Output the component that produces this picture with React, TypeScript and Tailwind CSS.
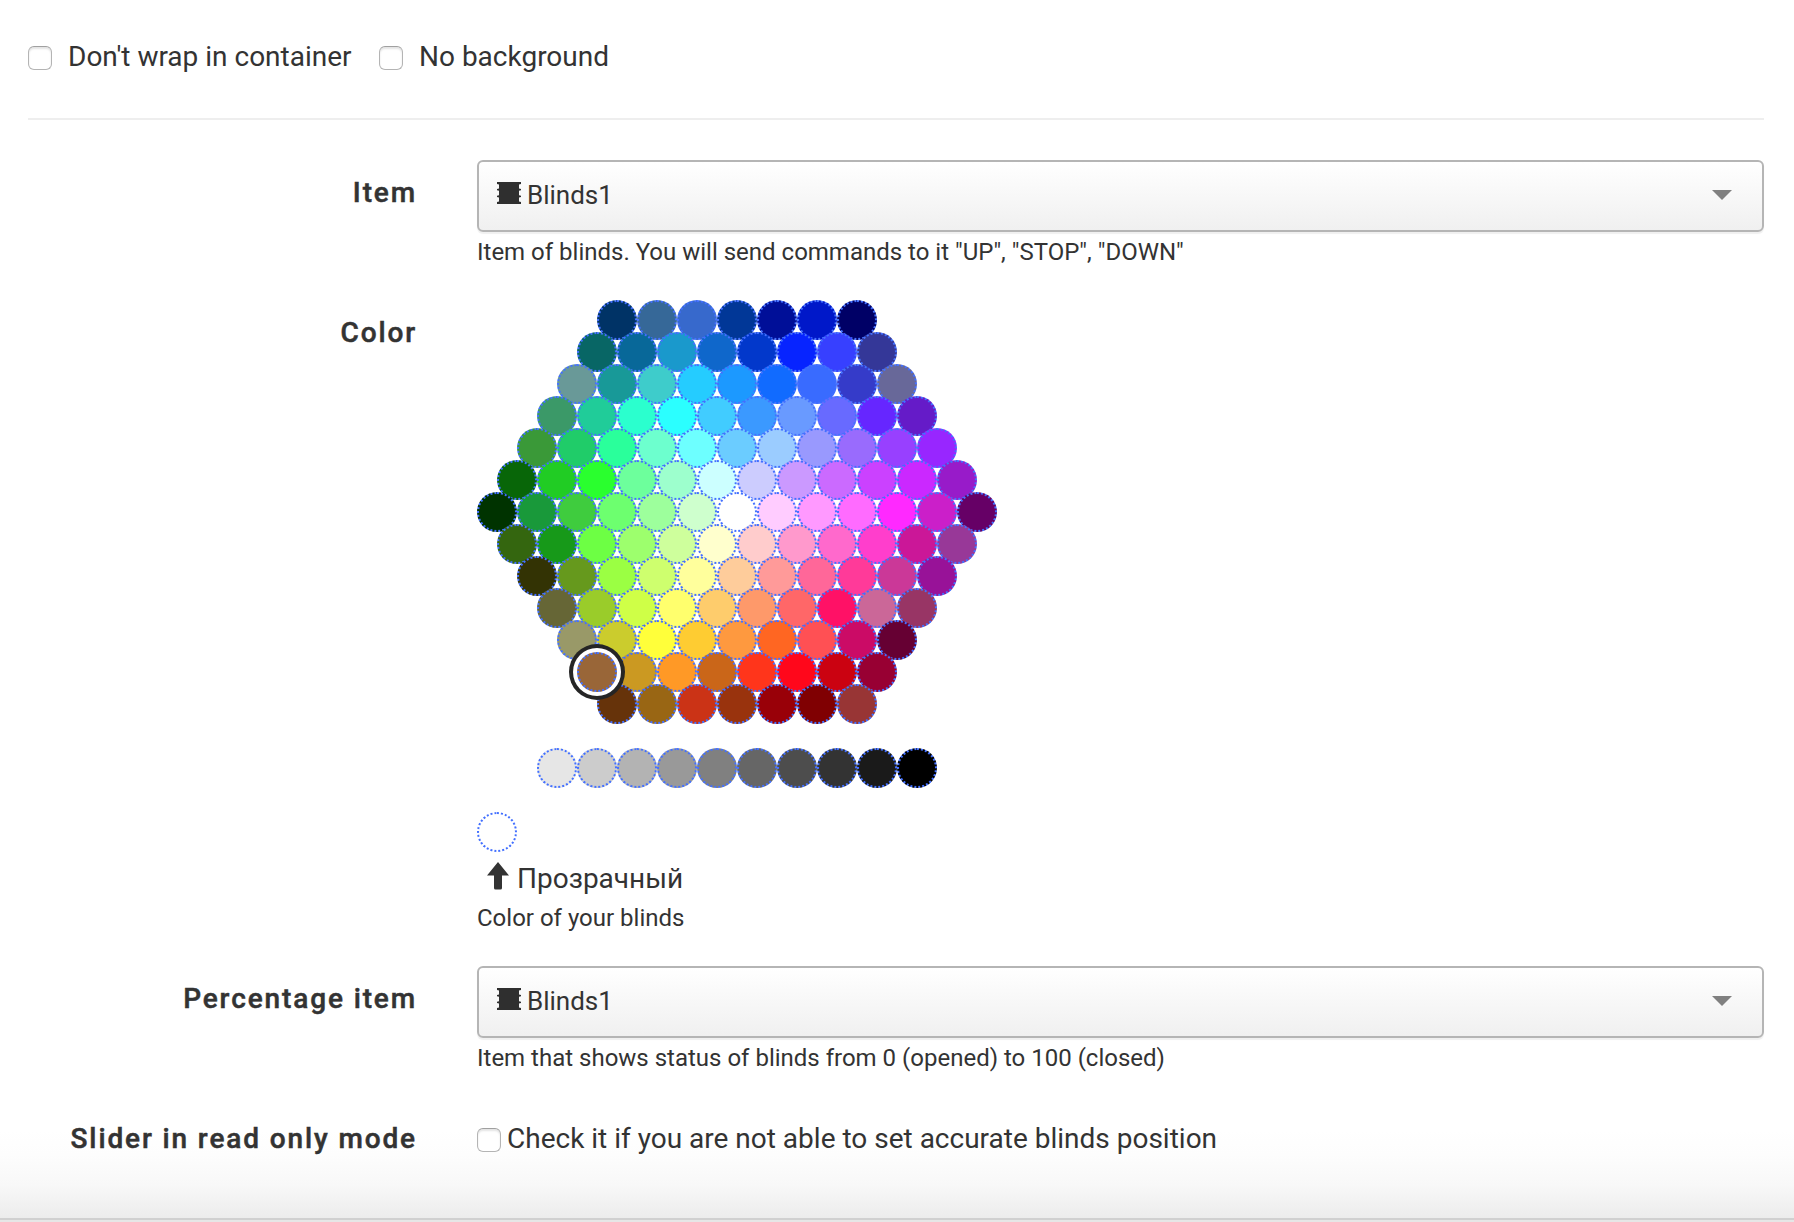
import React from "react";

const HEX_ROWS: string[] = [
  "#003366 #366898 #3769cc #013797 #000f98 #0018c9 #000066",
  "#086665 #086899 #1a99cc #0f67cb #0238cb #0724ff #3740ff #343798",
  "#699998 #189998 #3ecccb #25ccff #1c99ff #116bff #396bff #353bc9 #686899",
  "#3b9968 #20cc99 #2bffce #2bffff #41ccff #3b99ff #699aff #686aff #6626ff #651bc8",
  "#3a9938 #20cc69 #2aff9b #6dffce #6dffff #6bccff #9bccff #9999fe #996bfd #9840ff #9826ff",
  "#086608 #21cc24 #2aff2e #6dff9c #9dffcd #ccffff #ccccfe #cb99ff #cb6aff #cb41ff #cb28ff #981bc9",
  "#003300 #19993a #3fcc3e #6dff6f #9dff9c #ceffcd #ffffff #ffccff #ff99ff #ff6bff #ff29ff #cb1fc9 #660066",
  "#34660f #179919 #6dff44 #9dff6d #ceff9c #ffffcd #ffcccc #ff99cc #ff69cc #ff3ecc #cb1798 #983898",
  "#333304 #66991d #9bff43 #ceff6e #ffff9c #fecc9b #ff9a99 #ff6799 #ff3a99 #cb3898 #981298",
  "#666636 #9acc2a #cfff47 #ffff6d #fecc6c #fe996a #ff6768 #ff1166 #cb6798 #983565",
  "#999968 #cbcc2d #ffff3a #fecc32 #fe993f #ff6622 #ff5054 #cb0b66 #660033",
  "#996638 #cb9922 #ff9926 #ca6619 #ff351b #ff071b #cb0211 #980033",
  "#66330a #996614 #cb3316 #99330d #990008 #800002 #983535",
];

const GRAYS =
  "#e6e6e6 #cccccc #b3b3b3 #999999 #808080 #666666 #4d4d4d #333333 #1a1a1a #000000".split(" ");

const SELECTED = "#996638";

function Swatch({ color }: { color: string }) {
  const selected = color === SELECTED;
  return (
    <button
      type="button"
      aria-label={color}
      className={
        selected
          ? "relative z-10 size-10 shrink-0 rounded-full border-2 border-dotted border-[#4370ff] shadow-[0_0_0_4px_#fff,0_0_0_8px_#252525]"
          : "size-10 shrink-0 rounded-full border-2 border-dotted border-[#4370ff]"
      }
      style={{ backgroundColor: color }}
    />
  );
}

function Checkbox() {
  return (
    <span className="block size-6 shrink-0 rounded-[6px] border border-[#b4b4b4] border-t-[#a0a0a0] bg-white shadow-[inset_0_2px_2px_#e4e4e4]" />
  );
}

function BlindsIcon() {
  return (
    <svg width="24" height="22" viewBox="0 0 24 22" fill="#2f2f2f" className="mt-[-6px] shrink-0">
      <path d="M0 0h24v2l-2 .5v4l2 .5v1.200l-2 .5v4.600l2 .5V15l-2 .5v4l2 .5v2H0v-2l2-.5v-4L0 15v-1.200l2-.5V8.700L0 8.200V7l2-.5v-4L0 2z" />
    </svg>
  );
}

function Select({ value }: { value: string }) {
  return (
    <div className="flex h-[72px] items-center rounded-[6px] border-2 border-[#b5b5b5] bg-linear-to-b from-white to-[#f0f0f0] pr-[30px] pl-[18px] shadow-[0_2px_1px_#f0f0f0]">
      <BlindsIcon />
      <span className="mt-[-2px] ml-[6px] flex-1 text-[26px] leading-[30px]">{value}</span>
      <svg width="20" height="10" viewBox="0 0 20 10" fill="#808080" className="mt-[-2px]">
        <path d="M0 0h20L10 10z" />
      </svg>
    </div>
  );
}

function Row({ label, className, children }: { label: string; className: string; children: React.ReactNode }) {
  return (
    <div className={`flex ${className}`}>
      <div className="w-[389px] shrink-0 pt-[13px] text-right text-[28px] leading-10 font-medium tracking-[1.88px] whitespace-nowrap [-webkit-text-stroke:0.5px_#333]">
        {label}
      </div>
      <div className="ml-[60px] w-[1287px] shrink-0">{children}</div>
    </div>
  );
}

function Help({ children }: { children: React.ReactNode }) {
  return <p className="text-[24px] leading-[28px]">{children}</p>;
}

export default function App() {
  return (
    <div className="flex h-[1222px] w-[1794px] flex-col overflow-hidden bg-white font-['Roboto',sans-serif] text-[#333]">
      <div className="flex h-[1218px] shrink-0 flex-col bg-[linear-gradient(to_bottom,#fff_0,#fff_1130px,#fdfdfd_1155px,#f8f8f8_1185px,#ececec_1218px)] pr-[30px] pl-7">
        <div className="flex h-[120px] items-start border-b-2 border-[#eee] pt-[36px] text-[28px] leading-10">
          <div className="mt-[10px]"><Checkbox /></div>
          <span className="mt-px ml-4 w-[311px] whitespace-nowrap">Don't wrap in container</span>
          <div className="mt-[10px]"><Checkbox /></div>
          <span className="mt-px ml-4 whitespace-nowrap">No background</span>
        </div>

        <Row label="Item" className="mt-10 h-[140px]">
          <Select value="Blinds1" />
          <div className="pt-[6px]"><Help>Item of blinds. You will send commands to it "UP", "STOP", "DOWN"</Help></div>
        </Row>

        <Row label="Color" className="h-[666px]">
          <div className="flex w-[520px] flex-col items-center">
            {HEX_ROWS.map((row, i) => (
              <div key={i} className="flex h-8">
                {row.split(" ").map((c) => (
                  <Swatch key={c} color={c} />
                ))}
              </div>
            ))}
            <div className="mt-8 flex h-10">
              {GRAYS.map((c) => (
                <Swatch key={c} color={c} />
              ))}
            </div>
          </div>
          <div className="mt-6 flex h-10">
            <Swatch color="transparent" />
          </div>
          <div className="flex h-[52px] items-start pt-[7px] pl-[10px] text-[28px] leading-10">
            <svg width="22" height="28" viewBox="0 0 22 28" fill="#333" className="mt-[3px]">
              <path d="M11 0l11 13.500h-7V26q0 1.500-1.500 1.500h-5Q7 27.500 7 26V13.500H0z" />
            </svg>
            <span className="ml-[8px]">Прозрачный</span>
          </div>
          <Help>Color of your blinds</Help>
        </Row>

        <Row label="Percentage item" className="h-[140px]">
          <Select value="Blinds1" />
          <div className="pt-[6px]"><Help>Item that shows status of blinds from 0 (opened) to 100 (closed)</Help></div>
        </Row>

        <Row label="Slider in read only mode" className="h-16">
          <div className="flex pt-[13px] text-[28px] leading-10">
            <div className="mt-[9px]"><Checkbox /></div>
            <span className="ml-[6px]">Check it if you are not able to set accurate blinds position</span>
          </div>
        </Row>
      </div>
      <div className="h-1 border-t-2 border-[#d0d0d0] bg-[#e6e6e6]" />
    </div>
  );
}
